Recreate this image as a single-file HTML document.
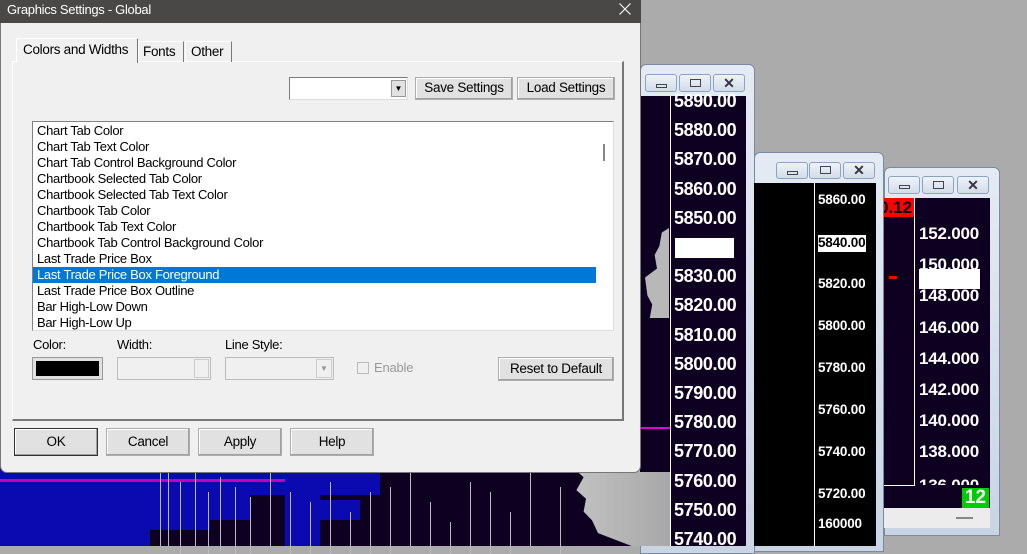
<!DOCTYPE html>
<html><head><meta charset="utf-8">
<style>
*{margin:0;padding:0;box-sizing:border-box}
body{width:1027px;height:546px;background:#ababab;position:relative;overflow:hidden;font-family:"Liberation Sans",sans-serif;font-size:13px;color:#000}
.a{position:absolute}
.btn{position:absolute;background:#e1e1e1;border:1px solid #adadad;box-shadow:inset -1px -1px 0 #a0a0a0,inset 1px 1px 0 #fff;text-align:center;font-size:13.5px;letter-spacing:-0.3px}
.lb{position:absolute;left:4px;white-space:nowrap;letter-spacing:-0.3px;font-size:13px}
.wb{position:absolute;width:32px;height:18px;border:1px solid #8ea3bf;border-radius:3px;background:linear-gradient(#eef3f9,#d3dce8)}
.wt{position:absolute;background:linear-gradient(#e4ebf4,#c9d5e4);border:1px solid #7a8aa0;border-radius:6px 6px 0 0}
.p1{position:absolute;left:674px;color:#fff;font-weight:bold;font-size:18px;line-height:20px;letter-spacing:-0.4px}
.p2{position:absolute;left:818px;color:#fff;font-weight:bold;font-size:13.5px;line-height:16px;letter-spacing:-0.2px}
.p3{position:absolute;left:919px;color:#fff;font-weight:bold;font-size:17px;line-height:20px;letter-spacing:-0.2px}
</style></head><body>

<!-- window 1 frame -->
<div class="wt" style="left:640px;top:64px;width:115px;height:490px"></div>

<!-- bottom-left chart below dialog -->
<div class="a" style="left:0;top:460px;width:670px;height:86px;background:#0e0020"></div>
<div class="a" style="left:0;top:460px;width:150px;height:86px;background:#0a0ab0"></div>
<div class="a" style="left:150px;top:460px;width:100px;height:60px;background:#0a0ab0"></div>
<div class="a" style="left:150px;top:520px;width:60px;height:10px;background:#0a0ab0"></div>
<div class="a" style="left:250px;top:460px;width:130px;height:35px;background:#0a0ab0"></div>
<div class="a" style="left:285px;top:460px;width:35px;height:86px;background:#0a0ab0"></div>
<div class="a" style="left:320px;top:500px;width:40px;height:20px;background:#0a0ab0"></div>
<div class="a" style="left:550px;top:460px;width:120px;height:86px;background:linear-gradient(90deg,#c8c8c8,#a8a8a8);clip-path:polygon(8% 0,20% 10%,28% 20%,22% 35%,30% 45%,28% 60%,35% 70%,40% 85%,68% 100%,100% 100%,100% 0)"></div>
<div class="a" style="left:0;top:479px;width:285px;height:3px;background:#c000c0"></div>
<div class="a" style="left:160px;top:472px;width:1px;height:74px;background:#bbb;box-shadow:8px 0 #bbb,20px 10px #bbb,35px 0 #bbb,48px 20px #bbb,60px 5px #bbb,75px 15px #bbb,90px 25px #bbb,110px 0 #bbb,130px 20px #bbb,150px 30px #bbb,170px 10px #bbb,190px 40px #bbb,210px 20px #bbb,230px 15px #bbb,250px 0 #bbb,270px 30px #bbb,290px 50px #bbb,310px 10px #bbb,330px 20px #bbb,350px 40px #bbb,370px 0 #bbb,400px 15px #bbb"></div>

<!-- window 1 -->
<div class="wb" style="left:645px;top:74px"><div class="a" style="left:10px;top:9px;width:11px;height:4px;border:1px solid #445"></div></div>
<div class="wb" style="left:679px;top:74px"><div class="a" style="left:10px;top:4px;width:11px;height:8px;border:1px solid #445"></div></div>
<div class="wb" style="left:713px;top:74px;text-align:center;font-size:14px;line-height:16px;color:#334;font-weight:bold">✕</div>
<div class="a" style="left:640px;top:96px;width:106px;height:376px;background:#0e0020"></div>
<div class="a" style="left:670px;top:472px;width:76px;height:74px;background:#0e0020"></div>
<div class="a" style="left:670px;top:96px;width:1px;height:450px;background:#fff"></div>
<div class="a" style="left:645px;top:228px;width:24px;height:90px;background:#b8b8b8;clip-path:polygon(100% 0,70% 5%,60% 20%,40% 30%,50% 45%,0 55%,10% 75%,30% 85%,20% 100%,100% 100%)"></div>
<div class="a" style="left:640px;top:427px;width:30px;height:2px;background:#e000e0"></div>
<div class="p1" style="top:91px">5890.00</div>
<div class="p1" style="top:120px">5880.00</div>
<div class="p1" style="top:149px">5870.00</div>
<div class="p1" style="top:179px">5860.00</div>
<div class="p1" style="top:208px">5850.00</div>
<div class="a" style="left:675px;top:238px;width:59px;height:20px;background:#fff"></div>
<div class="p1" style="top:266px">5830.00</div>
<div class="p1" style="top:295px">5820.00</div>
<div class="p1" style="top:325px">5810.00</div>
<div class="p1" style="top:354px">5800.00</div>
<div class="p1" style="top:383px">5790.00</div>
<div class="p1" style="top:412px">5780.00</div>
<div class="p1" style="top:441px">5770.00</div>
<div class="p1" style="top:471px">5760.00</div>
<div class="p1" style="top:500px">5750.00</div>
<div class="p1" style="top:529px">5740.00</div>

<!-- window 2 -->
<div class="wt" style="left:754px;top:152px;width:130px;height:400px"></div>
<div class="wb" style="left:776px;top:162px;height:17px"><div class="a" style="left:10px;top:8px;width:11px;height:4px;border:1px solid #445"></div></div>
<div class="wb" style="left:809px;top:162px;height:17px"><div class="a" style="left:10px;top:3px;width:11px;height:8px;border:1px solid #445"></div></div>
<div class="wb" style="left:843px;top:162px;height:17px;text-align:center;font-size:14px;line-height:15px;color:#334;font-weight:bold">✕</div>
<div class="a" style="left:754px;top:183px;width:122px;height:363px;background:#000"></div>
<div class="a" style="left:814px;top:183px;width:1px;height:363px;background:#fff"></div>
<div class="p2" style="top:192px">5860.00</div>
<div class="a" style="left:818px;top:235px;width:48px;height:17px;background:#fff"></div>
<div class="p2" style="top:235px;color:#000">5840.00</div>
<div class="p2" style="top:276px">5820.00</div>
<div class="p2" style="top:318px">5800.00</div>
<div class="p2" style="top:360px">5780.00</div>
<div class="p2" style="top:402px">5760.00</div>
<div class="p2" style="top:444px">5740.00</div>
<div class="p2" style="top:486px">5720.00</div>
<div class="p2" style="top:516px">160000</div>

<!-- window 3 -->
<div class="wt" style="left:884px;top:167px;width:116px;height:369px"></div>
<div class="wb" style="left:888px;top:176px"><div class="a" style="left:10px;top:8px;width:11px;height:4px;border:1px solid #445"></div></div>
<div class="wb" style="left:922px;top:176px"><div class="a" style="left:10px;top:4px;width:11px;height:8px;border:1px solid #445"></div></div>
<div class="wb" style="left:957px;top:176px;text-align:center;font-size:14px;line-height:16px;color:#334;font-weight:bold">✕</div>
<div class="a" style="left:884px;top:198px;width:106px;height:310px;background:#0e0020"></div>
<div class="a" style="left:884px;top:508px;width:106px;height:20px;background:#ececec"></div>
<div class="a" style="left:956px;top:517px;width:17px;height:2px;background:#888"></div>
<div class="a" style="left:914px;top:198px;width:1px;height:288px;background:#fff"></div>
<div class="a" style="left:884px;top:485px;width:31px;height:1px;background:#fff"></div>
<div class="a" style="left:884px;top:198px;width:30px;height:19px;background:#f00;color:#000;font-weight:bold;font-size:17px;line-height:19px;overflow:hidden;text-indent:-5px">0.12</div>
<div class="a" style="left:889px;top:276px;width:8px;height:3px;background:#f00"></div>
<div class="p3" style="top:224px">152.000</div>
<div class="p3" style="top:255px">150.000</div>
<div class="a" style="left:919px;top:269px;width:61px;height:20px;background:#fff"></div>
<div class="p3" style="top:286px">148.000</div>
<div class="p3" style="top:318px">146.000</div>
<div class="p3" style="top:349px">144.000</div>
<div class="p3" style="top:380px">142.000</div>
<div class="p3" style="top:411px">140.000</div>
<div class="p3" style="top:442px">138.000</div>
<div class="a" style="left:919px;top:476px;width:62px;height:9px;overflow:hidden"><div class="p3" style="left:0;top:0">136.000</div></div>
<div class="a" style="left:962px;top:488px;width:27px;height:20px;background:#0c0;color:#fff;font-weight:bold;font-size:19px;line-height:20px;text-align:center">12</div>

<!-- dialog -->
<div class="a" style="left:0;top:0;width:641px;height:473px;background:#f0f0f0;border:1px solid #777;border-radius:0 0 7px 7px"></div>
<div class="a" style="left:0;top:0;width:641px;height:23px;background:#4a4846;color:#fff;font-size:13px;line-height:19px;padding-left:7px;letter-spacing:-0.3px">Graphics Settings - Global</div>
<svg class="a" style="left:619px;top:3px" width="12" height="12"><path d="M0.5 0.5L11.5 11.5M11.5 0.5L0.5 11.5" stroke="#fff" stroke-width="1.1"/></svg>

<!-- tabs -->
<div class="a" style="left:12px;top:61px;width:612px;height:360px;border:1px solid #fff;border-right:2px solid #777;border-bottom:2px solid #777"></div>
<div class="a" style="left:138px;top:41px;width:46px;height:21px;border:1px solid #fff;border-right:1px solid #777;border-bottom:none;padding:2px 0 0 4px;font-size:13.5px;letter-spacing:-0.3px">Fonts</div>
<div class="a" style="left:185px;top:41px;width:47px;height:21px;border:1px solid #fff;border-right:1px solid #777;border-bottom:none;padding:2px 0 0 5px;font-size:13.5px;letter-spacing:-0.3px">Other</div>
<div class="a" style="left:16px;top:38px;width:122px;height:25px;background:#f0f0f0;border:1px solid #fff;border-right:1px solid #777;border-bottom:none;padding:3px 0 0 6px;font-size:13.5px;letter-spacing:-0.3px">Colors and Widths</div>

<div class="a" style="left:289px;top:77px;width:119px;height:23px;background:#fff;border:1px solid #7a7a7a;border-right-color:#ddd;border-bottom-color:#ddd"></div>
<div class="a" style="left:391px;top:80px;width:15px;height:17px;background:#e1e1e1;border:1px solid #999;font-size:8px;text-align:center;line-height:15px">▼</div>
<div class="btn" style="left:415px;top:77px;width:98px;height:23px;line-height:20px">Save Settings</div>
<div class="btn" style="left:517px;top:77px;width:98px;height:23px;line-height:20px">Load Settings</div>

<!-- list -->
<div class="a" style="left:32px;top:121px;width:582px;height:210px;background:#fff;border:1px solid #828282;border-right-color:#ddd;border-bottom-color:#ddd;overflow:hidden">
<div class="a" style="left:570px;top:22px;width:2px;height:17px;background:#888"></div>
<div class="a" style="left:0;top:145px;width:563px;height:16px;background:#0078d7"></div>
<div class="lb" style="top:1px">Chart Tab Color</div>
<div class="lb" style="top:17px">Chart Tab Text Color</div>
<div class="lb" style="top:33px">Chart Tab Control Background Color</div>
<div class="lb" style="top:49px">Chartbook Selected Tab Color</div>
<div class="lb" style="top:65px">Chartbook Selected Tab Text Color</div>
<div class="lb" style="top:81px">Chartbook Tab Color</div>
<div class="lb" style="top:97px">Chartbook Tab Text Color</div>
<div class="lb" style="top:113px">Chartbook Tab Control Background Color</div>
<div class="lb" style="top:129px">Last Trade Price Box</div>
<div class="lb" style="top:145px;color:#fff">Last Trade Price Box Foreground</div>
<div class="lb" style="top:161px">Last Trade Price Box Outline</div>
<div class="lb" style="top:177px">Bar High-Low Down</div>
<div class="lb" style="top:193px">Bar High-Low Up</div>
</div>

<div class="a" style="left:33px;top:337px;letter-spacing:-0.3px">Color:</div>
<div class="a" style="left:117px;top:337px;letter-spacing:-0.3px">Width:</div>
<div class="a" style="left:225px;top:337px;letter-spacing:-0.3px">Line Style:</div>
<div class="a" style="left:32px;top:357px;width:71px;height:23px;background:#e1e1e1;border:1px solid #999;padding:3px"><div style="width:100%;height:100%;background:#000"></div></div>
<div class="a" style="left:117px;top:357px;width:94px;height:23px;border:1px solid #bbb;background:#f0f0f0"></div>
<div class="a" style="left:194px;top:359px;width:15px;height:19px;border:1px solid #ccc"></div>
<div class="a" style="left:225px;top:357px;width:109px;height:23px;border:1px solid #bbb;background:#f0f0f0"></div>
<div class="a" style="left:316px;top:359px;width:16px;height:19px;border:1px solid #ccc;color:#999;font-size:8px;text-align:center;line-height:18px">▼</div>
<div class="a" style="left:357px;top:362px;width:12px;height:12px;border:1px solid #bbb"></div>
<div class="a" style="left:374px;top:360px;color:#999;letter-spacing:-0.2px">Enable</div>
<div class="btn" style="left:498px;top:357px;width:116px;height:24px;line-height:21px">Reset to Default</div>

<div class="btn" style="left:14px;top:428px;width:84px;height:28px;line-height:26px;border-color:#333">OK</div>
<div class="btn" style="left:106px;top:428px;width:84px;height:28px;line-height:26px">Cancel</div>
<div class="btn" style="left:198px;top:428px;width:84px;height:28px;line-height:26px">Apply</div>
<div class="btn" style="left:290px;top:428px;width:84px;height:28px;line-height:26px">Help</div>

</body></html>
